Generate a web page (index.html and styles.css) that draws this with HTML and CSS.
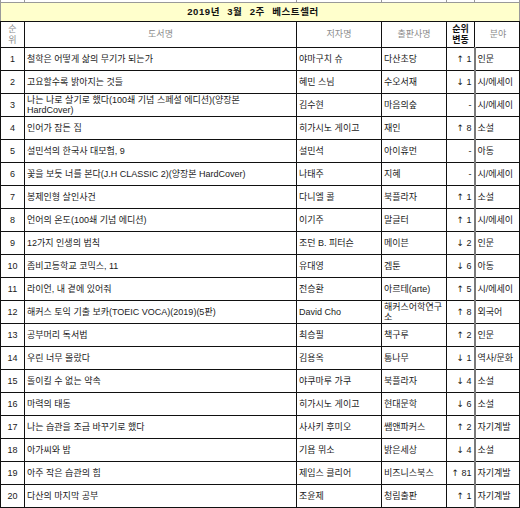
FILE: index.html
```html
<!DOCTYPE html>
<html lang="ko">
<head>
<meta charset="utf-8">
<title>2019년 3월 2주 베스트셀러</title>
<link rel="stylesheet" href="styles.css">
</head>
<body>
<table class="best">
<colgroup>
<col class="c-rank"><col class="c-title"><col class="c-author"><col class="c-pub"><col class="c-move"><col class="c-genre">
</colgroup>
<tr class="strip"><td></td><td></td><td></td><td></td><td></td><td></td></tr>
<tr class="caption-row"><td colspan="6">2019년 3월 2주 베스트셀러</td></tr>
<tr class="head">
<td class="h-rank">순<br>위</td><td>도서명</td><td>저자명</td><td>출판사명</td><td class="h-move">순위<br>변동</td><td class="genre">분야</td>
</tr>
<tr><td class="num">1</td><td>철학은 어떻게 삶의 무기가 되는가</td><td>야마구치 슈</td><td>다산초당</td><td class="move"><span class="arr">↑</span> 1</td><td class="genre">인문</td></tr>
<tr><td class="num">2</td><td>고요할수록 밝아지는 것들</td><td>혜민 스님</td><td>수오서재</td><td class="move"><span class="arr">↓</span> 1</td><td class="genre">시/에세이</td></tr>
<tr><td class="num">3</td><td class="two">나는 나로 살기로 했다(100쇄 기념 스페셜 에디션)(양장본<br>HardCover)</td><td>김수현</td><td>마음의숲</td><td class="move">-</td><td class="genre">시/에세이</td></tr>
<tr><td class="num">4</td><td>인어가 잠든 집</td><td>히가시노 게이고</td><td>재인</td><td class="move"><span class="arr">↑</span> 8</td><td class="genre">소설</td></tr>
<tr><td class="num">5</td><td>설민석의 한국사 대모험, 9</td><td>설민석</td><td>아이휴먼</td><td class="move">-</td><td class="genre">아동</td></tr>
<tr><td class="num">6</td><td>꽃을 보듯 너를 본다(J.H CLASSIC 2)(양장본 HardCover)</td><td>나태주</td><td>지혜</td><td class="move">-</td><td class="genre">시/에세이</td></tr>
<tr><td class="num">7</td><td>봉제인형 살인사건</td><td>다니엘 콜</td><td>북플라자</td><td class="move"><span class="arr">↑</span> 1</td><td class="genre">소설</td></tr>
<tr><td class="num">8</td><td>언어의 온도(100쇄 기념 에디션)</td><td>이기주</td><td>말글터</td><td class="move"><span class="arr">↑</span> 1</td><td class="genre">시/에세이</td></tr>
<tr><td class="num">9</td><td>12가지 인생의 법칙</td><td>조던 B. 피터슨</td><td>메이븐</td><td class="move"><span class="arr">↓</span> 2</td><td class="genre">인문</td></tr>
<tr><td class="num">10</td><td>좀비고등학교 코믹스, 11</td><td>유대영</td><td>겜툰</td><td class="move"><span class="arr">↓</span> 6</td><td class="genre">아동</td></tr>
<tr><td class="num">11</td><td>라이언, 내 곁에 있어줘</td><td>전승환</td><td>아르테(arte)</td><td class="move"><span class="arr">↑</span> 5</td><td class="genre">시/에세이</td></tr>
<tr><td class="num">12</td><td>해커스 토익 기출 보카(TOEIC VOCA)(2019)(5판)</td><td>David Cho</td><td class="two">해커스어학연구<br>소</td><td class="move"><span class="arr">↑</span> 8</td><td class="genre">외국어</td></tr>
<tr><td class="num">13</td><td>공부머리 독서법</td><td>최승필</td><td>책구루</td><td class="move"><span class="arr">↑</span> 2</td><td class="genre">인문</td></tr>
<tr><td class="num">14</td><td>우린 너무 몰랐다</td><td>김용옥</td><td>통나무</td><td class="move"><span class="arr">↓</span> 1</td><td class="genre">역사/문화</td></tr>
<tr><td class="num">15</td><td>돌이킬 수 없는 약속</td><td>야쿠마루 가쿠</td><td>북플라자</td><td class="move"><span class="arr">↓</span> 4</td><td class="genre">소설</td></tr>
<tr><td class="num">16</td><td>마력의 태동</td><td>히가시노 게이고</td><td>현대문학</td><td class="move"><span class="arr">↓</span> 6</td><td class="genre">소설</td></tr>
<tr><td class="num">17</td><td>나는 습관을 조금 바꾸기로 했다</td><td>사사키 후미오</td><td>쌤앤파커스</td><td class="move"><span class="arr">↑</span> 2</td><td class="genre">자기계발</td></tr>
<tr><td class="num">18</td><td>아가씨와 밤</td><td>기욤 뮈소</td><td>밝은세상</td><td class="move"><span class="arr">↓</span> 4</td><td class="genre">소설</td></tr>
<tr><td class="num">19</td><td>아주 작은 습관의 힘</td><td>제임스 클리어</td><td>비즈니스북스</td><td class="move"><span class="arr">↑</span> 81</td><td class="genre">자기계발</td></tr>
<tr><td class="num">20</td><td>다산의 마지막 공부</td><td>조윤제</td><td>청림출판</td><td class="move"><span class="arr">↑</span> 1</td><td class="genre">자기계발</td></tr>
</table>
</body>
</html>
```

FILE: styles.css
```css
html, body {
  margin: 0;
  padding: 0;
  background: #ffffff;
}

.best {
  border-collapse: collapse;
  table-layout: fixed;
  width: 519px;
  font-family: "Liberation Sans", "Noto Sans CJK KR", sans-serif;
  font-size: 9px;
  color: #1a1a1a;
}

.c-rank { width: 24px; }
.c-title { width: 272px; }
.c-author { width: 85px; }
.c-pub { width: 65px; }
.c-move { width: 28px; }
.c-genre { width: 45px; }

.best td {
  border: 1px solid #111;
  padding: 0 2px;
  height: 22px;
  line-height: 10px;
  white-space: nowrap;
  overflow: hidden;
  vertical-align: middle;
  text-align: left;
}

.best .strip td {
  height: 2px;
  padding: 0;
  border-top: none;
  border-color: #999;
}

.best .caption-row td {
  height: 18px;
  background: #ffffcc;
  text-align: center;
  font-weight: bold;
  font-size: 9.5px;
  color: #111;
  word-spacing: 4px;
  letter-spacing: 0.6px;
  border-top-color: #999;
  border-left-color: #999;
  border-right-color: #999;
  padding-right: 16px;
}

.best .head td {
  height: 25px;
  text-align: center;
  color: #8c8c8c;
  line-height: 11px;
}

.best .head td.h-move {
  color: #111;
  font-weight: bold;
  padding: 0;
}

.best .head td.h-rank {
  padding: 0;
}

.best td.num {
  text-align: center;
  padding: 0;
}

.best td.move {
  text-align: right;
  padding-right: 2px;
}

.arr {
  font-family: "DejaVu Sans", sans-serif;
  font-size: 9px;
  line-height: 10px;
}

.best td.genre {
  border-left: 2px solid #7a7a7a;
  padding-left: 2px;
  padding-right: 0;
}

.best .head td.genre {
  border-left: 1px solid #111;
  text-align: center;
}

.best td.two {
  line-height: 10px;
}
```
